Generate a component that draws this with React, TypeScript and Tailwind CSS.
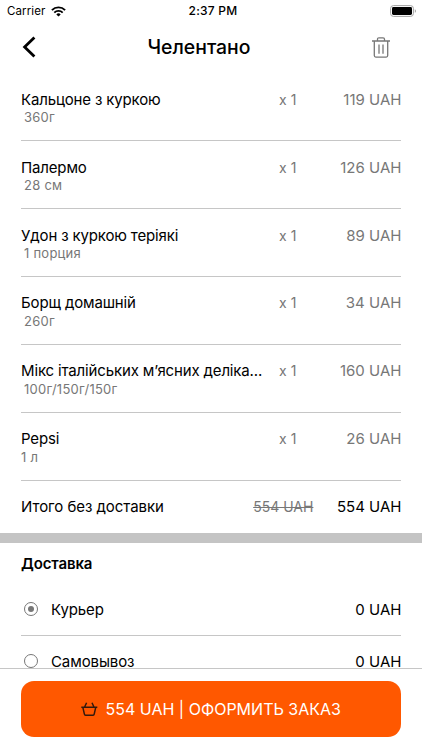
/**
 * Basket screen: ordered dishes, delivery options and checkout button
 */

import { useState } from 'react';

interface CartItem {
  name: string;
  portion: string;
  count: number;
  price: number;
  indent?: boolean;
}

const items: CartItem[] = [
  { name: 'Кальцоне з куркою', portion: '360г', count: 1, price: 119, indent: true },
  { name: 'Палермо', portion: '28 см', count: 1, price: 126, indent: true },
  { name: 'Удон з куркою теріякі', portion: '1 порция', count: 1, price: 89, indent: true },
  { name: 'Борщ домашній', portion: '260г', count: 1, price: 34, indent: true },
  { name: 'Мікс італійських м’ясних деліка...', portion: '100г/150г/150г', count: 1, price: 160, indent: true },
  { name: 'Pepsi', portion: '1 л', count: 1, price: 26 },
];

const deliveryOptions = [
  { id: 'courier', label: 'Курьер', price: 0 },
  { id: 'pickup', label: 'Самовывоз', price: 0 },
];

function StatusBar() {
  return (
    <div className="h-[22px] grid grid-cols-3 items-center pl-[7px] pr-[5px] text-[11.5px] leading-[22px]">
      <div className="flex items-center gap-[6px]">
        <span className="tracking-[0.1px]">Carrier</span>
        <svg width="15" height="11" viewBox="0 0 15 11" fill="none" stroke="#000" strokeWidth="1.9">
          <path d="M.9 4.1a9.4 9.4 0 0 1 13.2 0" />
          <path d="M3.3 6.6a6 6 0 0 1 8.4 0" />
          <path d="M7.5 10.6 5.3 8.4a3.2 3.2 0 0 1 4.4 0z" fill="#000" stroke="none" />
        </svg>
      </div>
      <span className="pl-[2px] text-center font-medium text-[12px] tracking-[0.25px]">2:37 PM</span>
      <svg className="justify-self-end" width="27" height="12" viewBox="0 0 27 12">
        <rect x=".6" y=".6" width="22.8" height="10.8" rx="2.8" fill="none" stroke="#a3a3a3" />
        <rect x="2" y="2" width="20" height="8" rx="1.4" fill="#000" />
        <path d="M24.8 4.2v3.6c1.6-.5 1.6-3.1 0-3.6z" fill="#a3a3a3" />
      </svg>
    </div>
  );
}

function Header() {
  return (
    <header className="h-[51px] grid grid-cols-[60px_1fr_60px] items-center">
      <button aria-label="Назад" className="pl-[22px] -mt-px">
        <svg width="14" height="22" viewBox="0 0 14 22" fill="none" stroke="#000" strokeWidth="2.8">
          <path d="M12.4 1.4 2.6 11l9.8 9.6" />
        </svg>
      </button>
      <h1 className="pr-[24px] pt-[1px] text-center text-[19.4px] font-medium">Челентано</h1>
      <button aria-label="Очистить" className="pl-[10px] -mt-px">
        <svg width="18" height="21" viewBox="0 0 18 21" fill="none" stroke="#777" strokeWidth="1.3">
          <path d="M0 4h18M5.5 4V2.2Q5.5.8 6.9.8h4.2q1.4 0 1.4 1.4V4M2.3 4v14.6q0 1.5 1.5 1.5h10.4q1.5 0 1.5-1.5V4M7 7.4v9.4M11 7.4v9.4" />
        </svg>
      </button>
    </header>
  );
}

function ItemRow({ item }: { item: CartItem }) {
  return (
    <li className="h-[67.9px] border-b border-[#c6c6c6] pt-[16.4px]">
      <div className="-mr-[0.4px] flex items-center leading-[19px]">
        <span className="flex-1 whitespace-nowrap tracking-[-0.15px]">{item.name}</span>
        <span className="text-[14px] text-[#777]">x {item.count}</span>
        <span className="w-[105px] text-right text-[#777]">{item.price} UAH</span>
      </div>
      <div className={`mt-[0.5px] text-[13px] leading-4 text-[#777] tracking-[0.25px] ${item.indent ? 'pl-[3px]' : ''}`}>
        {item.portion}
      </div>
    </li>
  );
}

export default function App() {
  const [delivery, setDelivery] = useState('courier');

  return (
    <div className="w-full h-screen flex flex-col overflow-hidden bg-white text-black text-[15px] font-['Inter',sans-serif]">
      <StatusBar />
      <Header />

      <main className="flex-1 min-h-0 overflow-hidden">
        <ul className="px-[21px] pt-[0.4px]">
          {items.map((item) => (
            <ItemRow key={item.name} item={item} />
          ))}
        </ul>
        <div className="h-[52.2px] pl-[21px] pr-[20.6px] flex items-center">
          <span className="flex-1 tracking-[-0.06px]">Итого без доставки</span>
          <span className="pb-px text-[14px] text-[#777] line-through">554 UAH</span>
          <span className="w-[88px] text-right">554 UAH</span>
        </div>
        <div className="h-[10px] bg-[#c4c4c4]" />

        <section className="px-[21px]">
          <h2 className="h-[41px] leading-[41px] font-semibold tracking-[-0.12px]">Доставка</h2>
          {deliveryOptions.map((option) => (
            <label key={option.id} className="h-[52px] flex items-center border-b border-[#c6c6c6] cursor-pointer">
              <input
                type="radio"
                name="delivery"
                className="sr-only"
                checked={delivery === option.id}
                onChange={() => setDelivery(option.id)}
              />
              <span className="ml-[3px] mr-[13px] size-[14px] rounded-full border border-[#777] flex items-center justify-center">
                {delivery === option.id && <span className="size-[6px] rounded-full bg-[#777]" />}
              </span>
              <span className="flex-1 pt-px tracking-[-0.1px]">{option.label}</span>
              <span className="-mr-[0.4px] pt-px">{option.price} UAH</span>
            </label>
          ))}
        </section>
      </main>

      <footer className="h-[82px] shrink-0 border-t border-[#c6c6c6] bg-white px-[21px] pt-[12px]">
        <button className="w-full h-[56px] rounded-[13px] bg-[#ff5800] text-white text-[16px] flex items-center justify-center gap-[7.5px]">
          <svg width="17" height="14" viewBox="0 0 17 14" fill="none" stroke="#33190d" strokeWidth="1.5" strokeLinejoin="round">
            <path d="M.3 5.2h16M1.8 5.2l1.6 7q.2 1 1.1 1h7.6q.9 0 1.1-1l1.6-7M3.5 5.2 5.6.7M13.1 5.2 11 .7" />
          </svg>
          <span>554 UAH | ОФОРМИТЬ ЗАКАЗ</span>
        </button>
      </footer>
    </div>
  );
}
